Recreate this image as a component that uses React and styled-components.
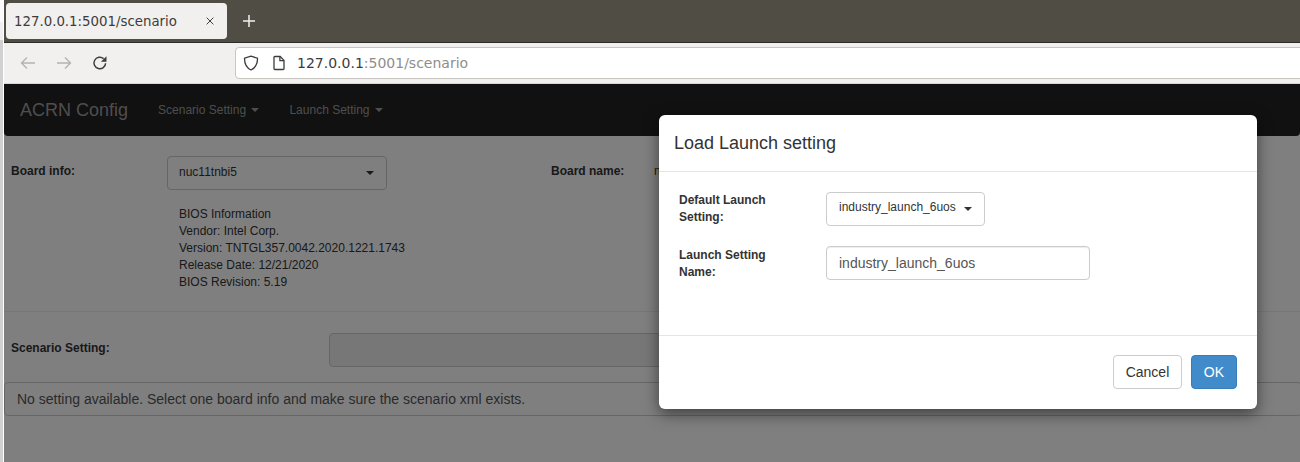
import React from 'react';
import styled, { createGlobalStyle } from 'styled-components';

const GlobalStyle = createGlobalStyle`
  html, body {
    margin: 0;
    height: 100%;
    overflow: hidden;
    background: #fff;
  }

  #root {
    height: 100%;
  }
`;

const Screen = styled.div`
  display: flex;
  width: 1300px;
  height: 462px;
  overflow: hidden;
`;

const SideStrip = styled.div`
  flex: 0 0 4px;
  box-sizing: border-box;
  border-right: 1px solid #fff;
  background: linear-gradient(#fafafa 0 22px, #eeeeee 22px 40px, #d1d1d1 40px);
`;

const Browser = styled.div`
  flex: 1;
  display: flex;
  flex-direction: column;
  min-width: 0;
  font-family: 'DejaVu Sans', sans-serif;
`;

/* browser chrome */
const TabBar = styled.div`
  flex: 0 0 43px;
  box-sizing: border-box;
  display: flex;
  align-items: flex-start;
  padding: 3px 0 0 2px;
  background: #504d45;
  border-bottom: 1px solid #2e2c28;
`;

const Tab = styled.div`
  display: flex;
  align-items: center;
  justify-content: space-between;
  box-sizing: border-box;
  width: 221px;
  height: 36px;
  padding: 0 11px 0 8px;
  background: #f2f0ee;
  border-radius: 4px;
  color: #3d3c3a;
  font-size: 13.33px;
`;

const NewTab = styled.div`
  display: flex;
  align-items: center;
  justify-content: center;
  width: 44px;
  height: 36px;
  color: #f2f0ee;
`;

const ToolBar = styled.div`
  flex: 0 0 41px;
  box-sizing: border-box;
  display: flex;
  align-items: center;
  background: #f2f0ee;
  border-bottom: 1px solid #d8d4cf;
`;

const NavIcons = styled.div`
  flex: 0 0 231px;
  display: flex;
  align-items: center;
  gap: 20px;
  padding-left: 16px;
  box-sizing: border-box;
`;

const UrlBar = styled.div`
  flex: 1;
  display: flex;
  align-items: center;
  box-sizing: border-box;
  height: 32px;
  margin-right: -6px;
  padding-left: 7px;
  gap: 12px;
  background: #fff;
  border: 1px solid #c9c5c0;
  border-radius: 4px;
  font-size: 14px;
  color: #908e8b;
`;

const UrlHost = styled.span`
  color: #3d3c3a;
`;

const UrlText = styled.div`
  margin-left: -2px;
  white-space: nowrap;
`;

/* page under the modal */
const Page = styled.div`
  position: relative;
  flex: 1;
  overflow: hidden;
  background: #fff;
  color: #333;
  font-family: 'Liberation Sans', Arial, sans-serif;
  font-size: 12px;
  line-height: 17px;
`;

const Navbar = styled.nav`
  display: flex;
  align-items: center;
  height: 52px;
  margin-bottom: 20px;
  background: #222;
  border-radius: 0 0 4px 4px;
  color: #9d9d9d;
`;

const Brand = styled.div`
  padding: 0 15px 0 16px;
  font-size: 18px;
  line-height: 55px;
`;

const NavItem = styled.div`
  padding: 0 15px;
`;

const Caret = styled.span`
  display: inline-block;
  width: 0;
  height: 0;
  margin-left: ${(p) => p.$gap || 0}px;
  vertical-align: middle;
  border-top: 4px solid ${(p) => p.color || '#333'};
  border-left: 4px solid transparent;
  border-right: 4px solid transparent;
`;

const BoardRow = styled.div`
  display: flex;
  align-items: flex-start;
  padding-left: 7px;
`;

const Label = styled.label`
  display: block;
  flex: 0 0 ${(p) => p.$width}px;
  font-weight: 700;
  padding-top: ${(p) => p.$top || 0}px;
  margin-top: ${(p) => p.$lift || 0}px;
`;

const BoardSelect = styled.div`
  flex: 0 0 220px;
  display: flex;
  align-items: center;
  justify-content: space-between;
  box-sizing: border-box;
  height: 34px;
  padding: 0 12px 0 11px;
  border: 1px solid #ccc;
  border-radius: 4px;
  background: #fff;
`;

const BoardValue = styled.span`
  margin-top: -1px;
`;

const BoardNameLabel = styled(Label)`
  margin-left: 164px;
`;

const BoardNameValue = styled.div`
  padding-top: 7px;
`;

const BiosInfo = styled.div`
  margin: 16px 0 0 175px;
`;

const Divider = styled.hr`
  margin: 20px 0 21px;
  border: 0;
  border-top: 1px solid #eee;
`;

const ScenarioRow = styled.div`
  display: flex;
  align-items: center;
  padding-left: 7px;
`;

const ScenarioInput = styled.div`
  flex: 0 0 760px;
  box-sizing: border-box;
  height: 34px;
  background: #eee;
  border: 1px solid #ccc;
  border-radius: 4px;
`;

const Alert = styled.div`
  box-sizing: border-box;
  height: 34px;
  margin: 15px -2px 0 0;
  padding: 0 12px;
  border: 1px solid #ccc;
  border-radius: 4px;
  background: #fff;
  color: #555;
  font-size: 14px;
  line-height: 32px;
`;

const Backdrop = styled.div`
  position: absolute;
  inset: 0;
  background: rgba(0, 0, 0, 0.5);
`;

const Modal = styled.div`
  position: absolute;
  top: 31px;
  left: 655px;
  width: 598px;
  height: 294px;
  display: flex;
  flex-direction: column;
  background: #fff;
  border-radius: 6px;
  box-shadow: 0 5px 15px rgba(0, 0, 0, 0.5);
`;

const ModalHeader = styled.div`
  flex: 0 0 56px;
  display: flex;
  align-items: center;
  padding: 0 15px;
  border-bottom: 1px solid #e5e5e5;
`;

const ModalTitle = styled.h4`
  margin: 0;
  font-size: 18px;
  font-weight: 400;
  line-height: 20px;
`;

const ModalBody = styled.div`
  flex: 1;
  display: grid;
  grid-template-columns: 147px 1fr;
  grid-auto-rows: 34px;
  row-gap: 20px;
  align-content: start;
  padding: 20px 20px 0;
`;

const ModalLabel = styled.label`
  padding-top: ${(p) => p.$top}px;
  font-weight: 700;
  width: 110px;
`;

const LaunchSelect = styled.div`
  justify-self: start;
  display: flex;
  align-items: center;
  gap: 8px;
  box-sizing: border-box;
  height: 34px;
  padding: 0 12px;
  border: 1px solid #ccc;
  border-radius: 4px;
`;

const LaunchValue = styled.span`
  margin-top: -4px;
`;

const NameInput = styled.input`
  box-sizing: border-box;
  width: 264px;
  height: 34px;
  padding: 6px 12px;
  border: 1px solid #ccc;
  border-radius: 4px;
  box-shadow: inset 0 1px 1px rgba(0, 0, 0, 0.075);
  color: #555;
  font: 14px 'Liberation Sans', Arial, sans-serif;
`;

const ModalFooter = styled.div`
  flex: 0 0 74px;
  box-sizing: border-box;
  display: flex;
  justify-content: flex-end;
  gap: 9px;
  padding: 19px 20px 0;
  border-top: 1px solid #e5e5e5;
`;

const Button = styled.button`
  height: 34px;
  padding: 0 ${(p) => (p.$primary ? 12 : 11.5)}px;
  border: 1px solid ${(p) => (p.$primary ? '#357ebd' : '#ccc')};
  border-radius: 4px;
  background: ${(p) => (p.$primary ? '#428bca' : '#fff')};
  color: ${(p) => (p.$primary ? '#fff' : '#333')};
  font: 14px 'Liberation Sans', Arial, sans-serif;
`;

const Icon = ({ size = 16, children, color = 'currentColor' }) => (
  <svg width={size} height={size} viewBox="0 0 16 16" fill="none" stroke={color} strokeWidth="1.3" style={{ flex: 'none' }}>
    {children}
  </svg>
);

export default function App() {
  return (
    <Screen>
      <GlobalStyle />
      <SideStrip />
      <Browser>
        <TabBar>
          <Tab>
            <span>127.0.0.1:5001/scenario</span>
            <Icon size={12} color="#3d3c3a">
              <path d="M3.5 3.5l9 9M12.5 3.5l-9 9" />
            </Icon>
          </Tab>
          <NewTab>
            <Icon size={16} color="#f2f0ee">
              <path d="M8 2v12M2 8h12" strokeWidth="1.5" />
            </Icon>
          </NewTab>
        </TabBar>
        <ToolBar>
          <NavIcons>
            <Icon color="#b4b2af">
              <path d="M15 8H1.5M7 2.5L1.5 8 7 13.5" />
            </Icon>
            <Icon color="#b4b2af">
              <path d="M1 8h13.5M9 2.5L14.5 8 9 13.5" />
            </Icon>
            <Icon color="#3d3c3a">
              <path d="M13.6 8.2a5.8 5.8 0 1 1-2-4.6" strokeWidth="1.5" />
              <path d="M14.5 1.2v5.6H8.9z" fill="#3d3c3a" stroke="none" />
            </Icon>
          </NavIcons>
          <UrlBar>
            <Icon color="#3d3c3a">
              <path d="M8 1.2L1.5 3.2C1.4 9 3 12.6 8 15c5-2.4 6.6-6 6.5-11.8z" />
            </Icon>
            <Icon color="#3d3c3a">
              <path d="M3 2.3a.8.8 0 0 1 .8-.8h5.4L13 5.4v8.3a.8.8 0 0 1-.8.8H3.8a.8.8 0 0 1-.8-.8z" />
              <path d="M8.9 1.5v4.2H13" />
            </Icon>
            <UrlText>
              <UrlHost>127.0.0.1</UrlHost>:5001/scenario
            </UrlText>
          </UrlBar>
        </ToolBar>
        <Page>
          <Navbar>
            <Brand>ACRN Config</Brand>
            <NavItem>
              Scenario Setting <Caret color="#9d9d9d" $gap={2} />
            </NavItem>
            <NavItem>
              Launch Setting <Caret color="#9d9d9d" $gap={2} />
            </NavItem>
          </Navbar>
          <BoardRow>
            <Label $width={156} $top={7}>
              Board info:
            </Label>
            <BoardSelect>
              <BoardValue>nuc11tnbi5</BoardValue>
              <Caret />
            </BoardSelect>
            <BoardNameLabel $width={103} $top={7}>
              Board name:
            </BoardNameLabel>
            <BoardNameValue>nuc11tnbi5</BoardNameValue>
          </BoardRow>
          <BiosInfo>
            BIOS Information
            <br />
            Vendor: Intel Corp.
            <br />
            Version: TNTGL357.0042.2020.1221.1743
            <br />
            Release Date: 12/21/2020
            <br />
            BIOS Revision: 5.19
          </BiosInfo>
          <Divider />
          <ScenarioRow>
            <Label $width={318} $lift={-4}>
              Scenario Setting:
            </Label>
            <ScenarioInput />
          </ScenarioRow>
          <Alert>No setting available. Select one board info and make sure the scenario xml exists.</Alert>
          <Backdrop />
          <Modal>
            <ModalHeader>
              <ModalTitle>Load Launch setting</ModalTitle>
            </ModalHeader>
            <ModalBody>
              <ModalLabel $top={0}>Default Launch Setting:</ModalLabel>
              <LaunchSelect>
                <LaunchValue>industry_launch_6uos</LaunchValue>
                <Caret />
              </LaunchSelect>
              <ModalLabel $top={1}>Launch Setting Name:</ModalLabel>
              <NameInput readOnly value="industry_launch_6uos" />
            </ModalBody>
            <ModalFooter>
              <Button>Cancel</Button>
              <Button $primary>OK</Button>
            </ModalFooter>
          </Modal>
        </Page>
      </Browser>
    </Screen>
  );
}
